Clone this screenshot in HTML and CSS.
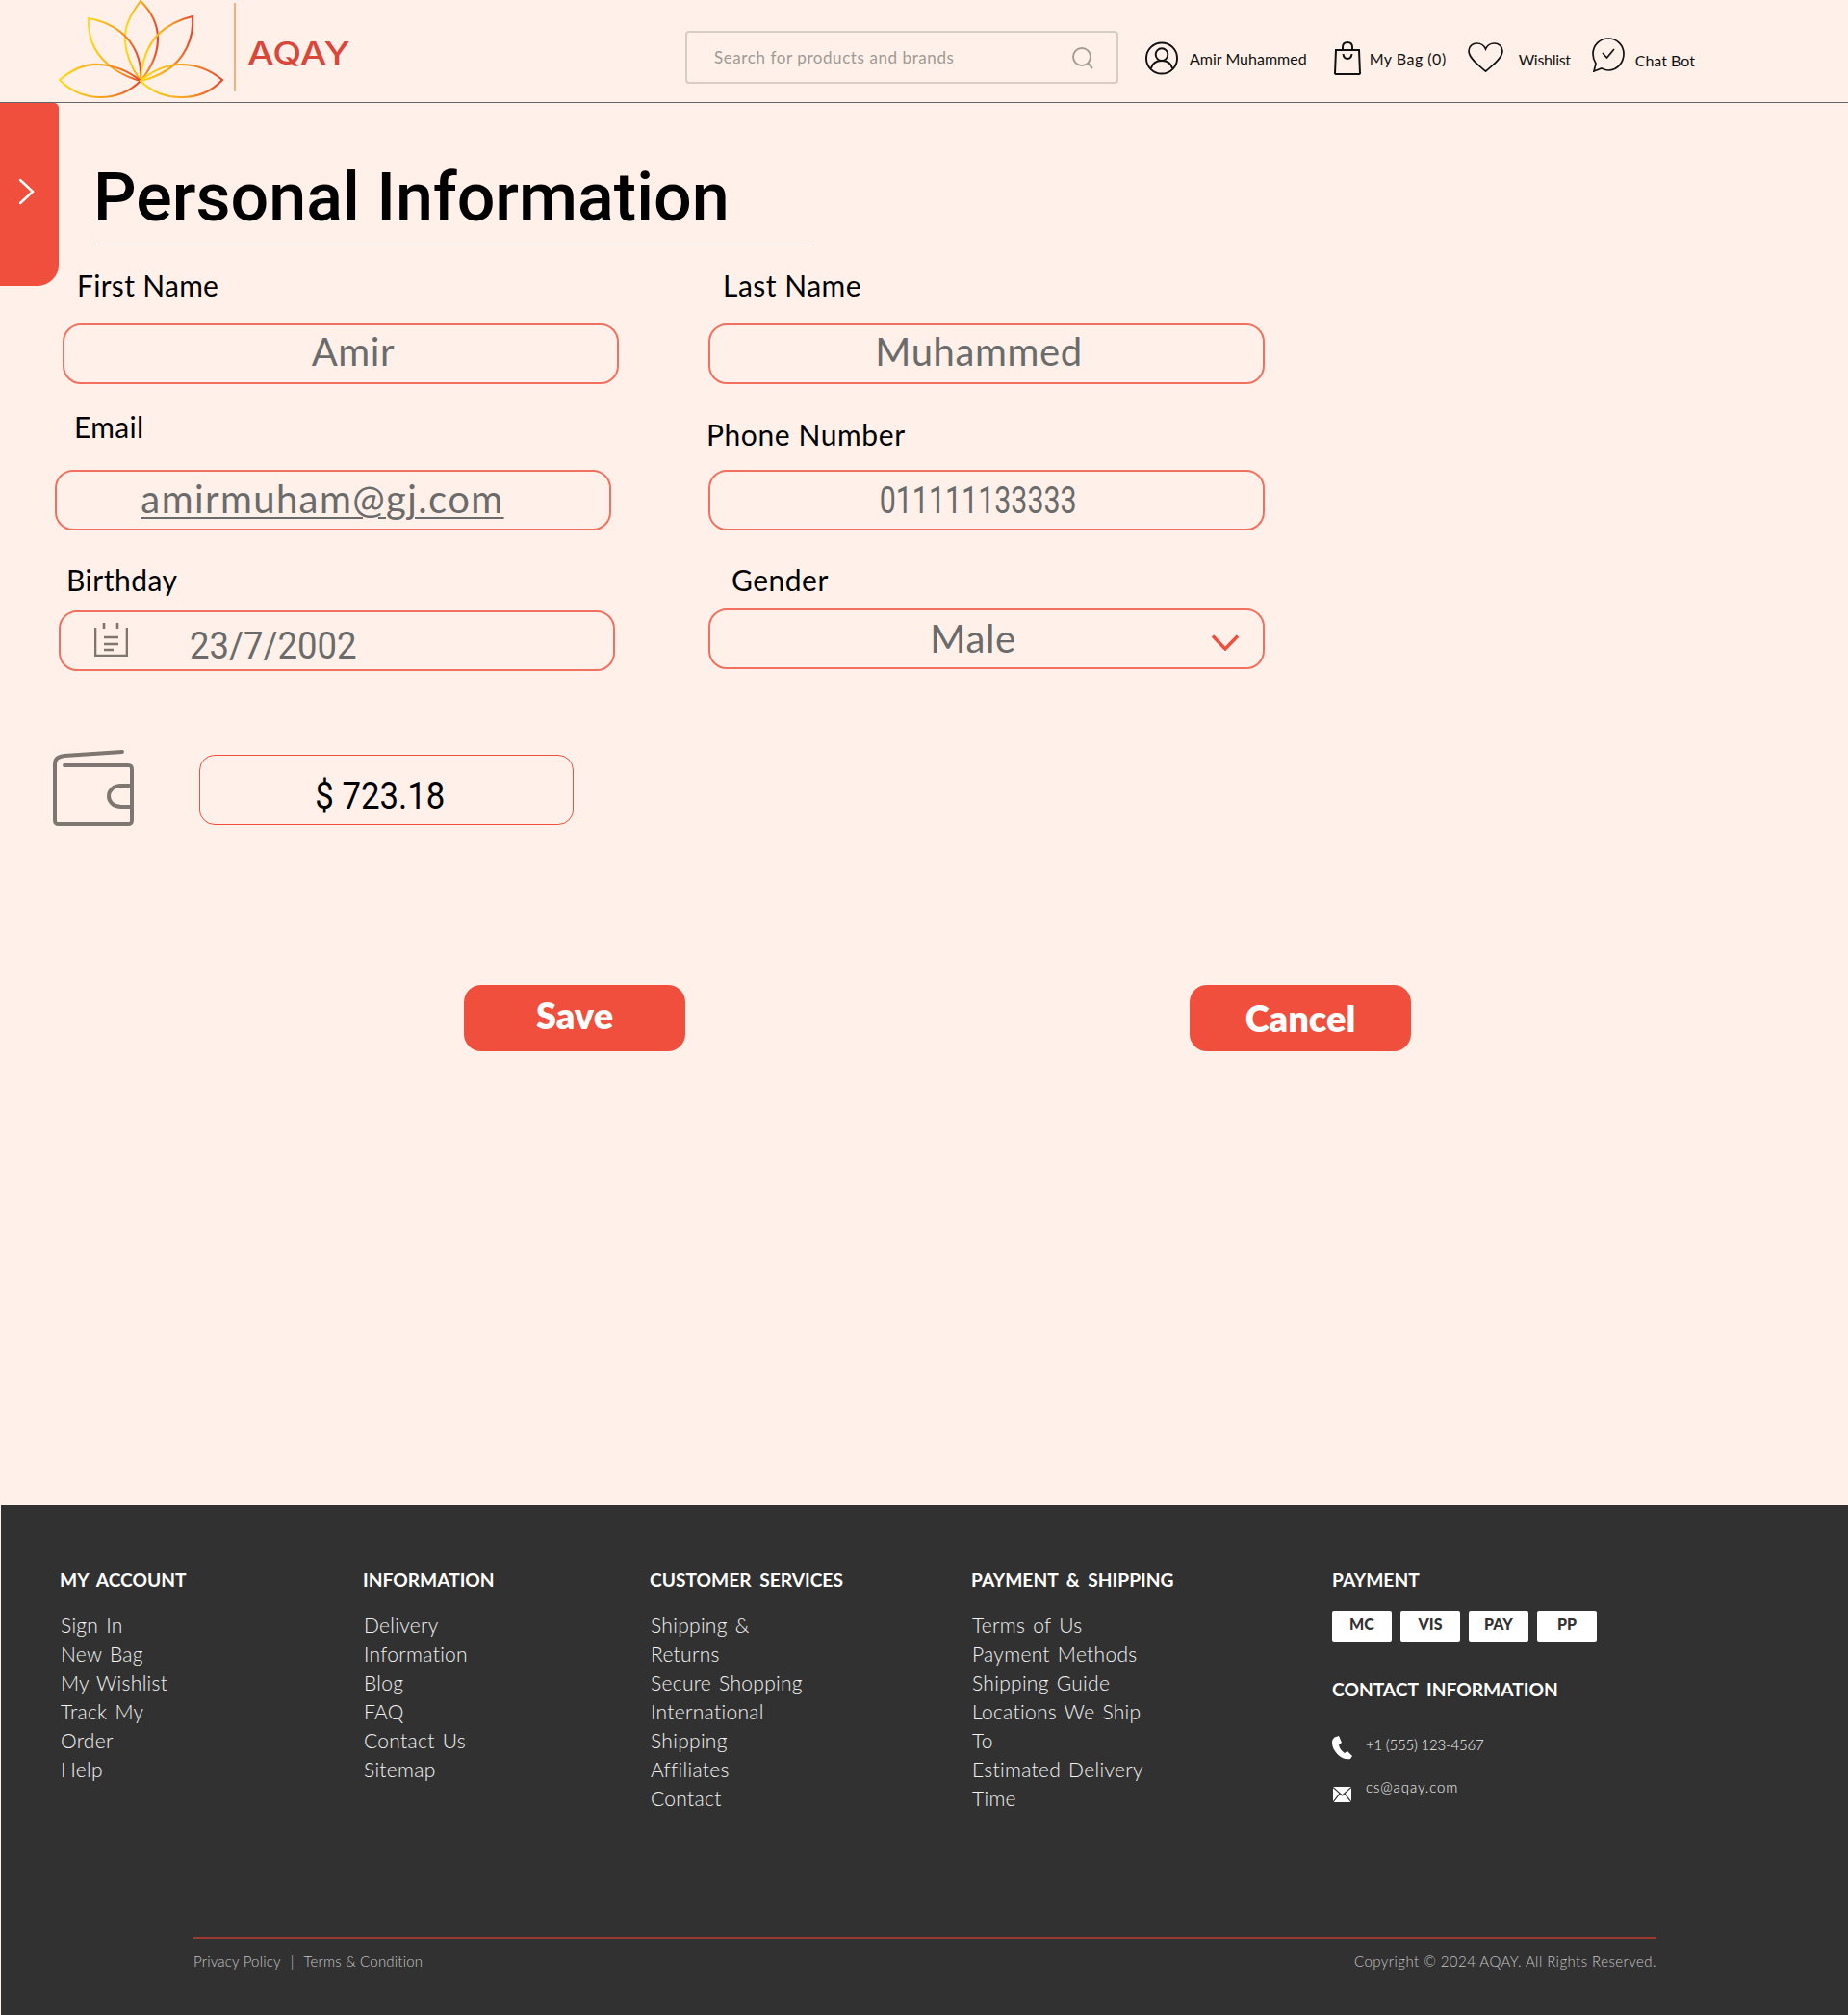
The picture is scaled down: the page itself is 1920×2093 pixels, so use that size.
FILE: index.html
```html
<!DOCTYPE html>
<html lang="en">

<head>
    <meta charset="UTF-8">
    <meta name="viewport" content="width=device-width, initial-scale=1.0">
    <title>AQAY - Personal Information</title>
    <link rel="stylesheet" href="styles.css">
</head>

<body>

    <header class="site-header">
        <svg class="logo" viewBox="0 0 172 103" fill="none" stroke-width="2.1">
            <defs>
                <linearGradient id="petal-a" x1="0" y1="0" x2="1" y2="0">
                    <stop offset="0" stop-color="#ffdc14" />
                    <stop offset="0.55" stop-color="#f9a01f" />
                    <stop offset="1" stop-color="#e8452f" />
                </linearGradient>
            </defs>
            <path stroke="url(#petal-a)" d="M85 1C74 16 68 27 69 43C70 60 78 74 85 84C95 72 103 58 103 40C103 25 95 11 85 1Z" />
            <path stroke="url(#petal-a)" d="M31 19C30 42 40 60 58 72C67 78 77 82 85 84C87 62 78 44 64 33C54 25 43 21 31 19Z" />
            <path stroke="url(#petal-a)" d="M85 84C86 66 91 49 103 36C113 26 126 20 139 17C141 40 130 62 112 73C104 78 94 82 85 84Z" />
            <path stroke="url(#petal-a)" d="M1 83C14 72 27 66 42 67C58 68 73 74 85 84C74 95 59 101 43 101C27 101 11 94 1 83Z" />
            <path stroke="url(#petal-a)" d="M85 84C98 73 112 67 127 67C143 67 158 73 170 83C159 95 143 101 127 101C111 101 96 95 85 84Z" />
        </svg>
        <span class="logo-divider"></span>
        <span class="brand">AQAY</span>

        <div class="search-box">
            <span class="search-text">Search for products and brands</span>
            <svg class="search-icon" viewBox="0 0 24 24" fill="none" stroke="#a39d98" stroke-width="2">
                <circle cx="11" cy="11" r="9" />
                <path d="M17.5 17.5L22 23" />
            </svg>
        </div>

        <a class="nav-item nav-user">
            <svg class="icon-user" viewBox="0 0 36 36" fill="none" stroke="#111" stroke-width="2">
                <circle cx="18" cy="18" r="16.5" />
                <circle cx="18" cy="14" r="6.5" />
                <path d="M6.5 29C8 23 12 20.5 18 20.5C24 20.5 28 23 29.5 29" />
            </svg>
            <span>Amir Muhammed</span>
        </a>
        <a class="nav-item nav-bag">
            <svg class="icon-bag" viewBox="0 0 28 35" fill="none" stroke="#111" stroke-width="2">
                <path d="M2 9H26L27 33C27 34 26 34 25 34H3C2 34 1 34 1 33Z" />
                <path d="M9 9V6C9 3 11 1 14 1C17 1 19 3 19 6V9" />
                <path d="M9.5 13C10 17 12 18 14 18C16 18 18 17 18.5 13" />
            </svg>
            <span>My Bag (0)</span>
        </a>
        <a class="nav-item nav-wish">
            <svg class="icon-heart" viewBox="0 0 37 31" fill="none" stroke="#111" stroke-width="1.7">
                <path d="M18.5 30C13 25 1 17 1 9C1 4 5 1 9.5 1C13.5 1 17 3.5 18.5 7C20 3.5 23.5 1 27.5 1C32 1 36 4 36 9C36 17 24 25 18.5 30Z" />
            </svg>
            <span>Wishlist</span>
        </a>
        <a class="nav-item nav-chat">
            <svg class="icon-chat" viewBox="0 0 34 36" fill="none" stroke="#111" stroke-width="1.7">
                <path d="M17 1C8 1 1 8 1 17C1 21 2 24 4 27L2 35L10 32C12 33 15 34 17 34C26 34 33 26 33 17C33 8 26 1 17 1Z" />
                <path d="M11 16L15.5 21L23 12" />
            </svg>
            <span>Chat Bot</span>
        </a>
    </header>

    <main class="page">
        <!-- side menu handle -->
        <div class="side-tab">
            <svg viewBox="0 0 17 28" fill="none" stroke="#fff" stroke-width="2.5" stroke-linecap="round">
                <path d="M2 2L15 14L2 26" />
            </svg>
        </div>

        <h1 class="page-title">Personal Information</h1>

        <div class="form-grid">
            <div class="field field-first">
                <label>First Name</label>
                <div class="input-box"><span>Amir</span></div>
            </div>
            <div class="field field-last">
                <label>Last Name</label>
                <div class="input-box"><span>Muhammed</span></div>
            </div>
            <div class="field field-email">
                <label>Email</label>
                <div class="input-box"><a>amirmuham@gj.com</a></div>
            </div>
            <div class="field field-phone">
                <label>Phone Number</label>
                <div class="input-box digits"><span>011111133333</span></div>
            </div>
            <div class="field field-birthday">
                <label>Birthday</label>
                <div class="input-box digits">
                    <svg class="icon-note" viewBox="0 0 35 35" fill="none" stroke="#7d7671" stroke-width="2.6">
                        <path d="M10 0V6M24 0V6M1 5V34H34V5" />
                        <path d="M10 15H25M10 22H25M10 28H20" />
                    </svg>
                    <span>23/7/2002</span>
                </div>
            </div>
            <div class="field field-gender">
                <label>Gender</label>
                <div class="input-box">
                    <span>Male</span>
                    <svg class="icon-down" viewBox="0 0 28 17" fill="none" stroke="#ef4f3c" stroke-width="3.4">
                        <path d="M1 1.5L14 15L27 1.5" />
                    </svg>
                </div>
            </div>
        </div>

        <div class="wallet-row">
            <svg class="icon-wallet" viewBox="0 0 84 79" fill="none" stroke="#7d7671" stroke-width="4" stroke-linecap="round">
                <path d="M72 2L12 6C5 7 2 9 2 15V73C2 76 3 77 6 77H78C81 77 82 76 82 73V20C82 17 81 16 78 16H12" />
                <path d="M82 37H71C63 37 58 42 58 48C58 54 63 59 71 59H82" />
            </svg>
            <div class="balance"><span>$ 723.18</span></div>
        </div>

        <div class="form-actions">
            <button class="btn btn-save">Save</button>
            <button class="btn btn-cancel">Cancel</button>
        </div>
    </main>

    <footer class="site-footer">
        <div class="footer-cols">
            <div class="footer-col col-account">
                <h3>MY ACCOUNT</h3>
                <ul>
                    <li>Sign In</li>
                    <li>New Bag</li>
                    <li>My Wishlist</li>
                    <li>Track My<br>Order</li>
                    <li>Help</li>
                </ul>
            </div>
            <div class="footer-col col-info">
                <h3>INFORMATION</h3>
                <ul>
                    <li>Delivery<br>Information</li>
                    <li>Blog</li>
                    <li>FAQ</li>
                    <li>Contact Us</li>
                    <li>Sitemap</li>
                </ul>
            </div>
            <div class="footer-col col-service">
                <h3>CUSTOMER SERVICES</h3>
                <ul>
                    <li>Shipping &amp;<br>Returns</li>
                    <li>Secure Shopping</li>
                    <li>International<br>Shipping</li>
                    <li>Affiliates</li>
                    <li>Contact</li>
                </ul>
            </div>
            <div class="footer-col col-shipping">
                <h3>PAYMENT &amp; SHIPPING</h3>
                <ul>
                    <li>Terms of Us</li>
                    <li>Payment Methods</li>
                    <li>Shipping Guide</li>
                    <li>Locations We Ship<br>To</li>
                    <li>Estimated Delivery<br>Time</li>
                </ul>
            </div>
            <div class="footer-col col-contact">
                <h3>PAYMENT</h3>
                <div class="pay-cards">
                    <span>MC</span>
                    <span>VIS</span>
                    <span>PAY</span>
                    <span>PP</span>
                </div>
                <h3 class="contact-title">CONTACT INFORMATION</h3>
                <div class="contact-line contact-phone">
                    <svg viewBox="0 0 21 25" fill="#fff">
                        <path d="M2.5 1.5L7 0L10 7L7 9.5C7.5 13 10 16 13 18L16 16L21 21L19 24C10 26.5 -2.5 14 0.5 4Z" />
                    </svg>
                    <span>+1 (555) 123-4567</span>
                </div>
                <div class="contact-line contact-mail">
                    <svg viewBox="0 0 19 16">
                        <rect width="19" height="16" fill="#fff" />
                        <path d="M0 .5L9.5 9L19 .5M0 16L7 6.8M19 16L12 6.8" fill="none" stroke="#313131" stroke-width="1.2" />
                    </svg>
                    <span>cs@aqay.com</span>
                </div>
            </div>
        </div>

        <div class="footer-bottom">
            <div class="legal-links">
                <span>Privacy Policy</span>
                <span class="sep">|</span>
                <span>Terms &amp; Condition</span>
            </div>
            <div class="copyright">Copyright © 2024 AQAY. All Rights Reserved.</div>
        </div>
    </footer>

</body>

</html>
```

FILE: styles.css
```css
* {
    box-sizing: border-box;
}

body {
    margin: 0;
    padding: 0;
    width: 1920px;
    background-color: #fff1e9;
    font-family: "Lato", "Noto Sans", sans-serif;
    color: #000;
}

/* Header */
.site-header {
    display: flex;
    align-items: flex-start;
    height: 107px;
    padding-left: 61px;
    border-bottom: 1px solid #666;
}

.logo {
    width: 172px;
    height: 103px;
    flex-shrink: 0;
}

.logo-divider {
    width: 2px;
    height: 92px;
    margin: 3px 0 0 10px;
    background-color: #f5b07a;
}

.brand {
    width: 120px;
    margin: 33px 0 0 12px;
    font-family: "Inter", sans-serif;
    font-size: 32px;
    line-height: 46px;
    font-weight: 500;
    color: #d9473a;
    transform: scaleX(1.22);
    transform-origin: left center;
}

.search-box {
    display: flex;
    align-items: center;
    justify-content: space-between;
    width: 450px;
    height: 55px;
    margin: 32px 0 0 335px;
    padding: 0 23px 0 28px;
    border: 2px solid #d6cec6;
    border-radius: 4px;
}

.search-text {
    font-size: 17px;
    letter-spacing: 0.58px;
    color: #a09a95;
}

.search-icon {
    width: 24px;
    height: 24px;
}

.nav-item {
    display: flex;
    align-items: center;
    font-size: 16px;
    line-height: 20px;
    color: #111;
    white-space: nowrap;
}

.nav-user {
    margin: 43px 0 0 27px;
    gap: 11px;
}

.nav-bag {
    margin: 43px 0 0 28px;
    gap: 9px;
    letter-spacing: 0.5px;
}

.nav-wish {
    margin: 44px 0 0 22px;
    gap: 16px;
    letter-spacing: -0.3px;
}

.nav-wish span {
    margin-top: 5px;
}

.nav-chat {
    margin: 39px 0 0 22px;
    gap: 11px;
}

.nav-chat span {
    margin-top: 12px;
}

.icon-user {
    width: 36px;
    height: 35px;
}

.icon-bag {
    width: 28px;
    height: 35px;
}

.icon-heart {
    width: 37px;
    height: 31px;
}

.icon-chat {
    width: 34px;
    height: 36px;
}

/* Main form */
.page {
    position: relative;
    height: 1456px;
    padding-top: 65px;
}

.side-tab {
    position: absolute;
    top: 0;
    left: 0;
    display: flex;
    align-items: center;
    width: 61px;
    height: 190px;
    padding: 0 0 6px 19px;
    background-color: #ef4f3c;
    border-radius: 0 5px 22px 0;
}

.side-tab svg {
    width: 17px;
    height: 28px;
}

.page-title {
    width: 747px;
    height: 83px;
    margin: 0 0 0 97px;
    border-bottom: 1px solid #111;
    font-family: "Roboto", sans-serif;
    font-size: 70px;
    line-height: 66px;
    font-weight: 500;
    white-space: nowrap;
}

.form-grid {
    display: grid;
    grid-template-columns: 736px 578px;
    margin-top: 22px;
}

.field label {
    display: block;
    font-size: 30px;
    line-height: 38px;
    letter-spacing: 0.3px;
}

.input-box {
    position: relative;
    display: flex;
    align-items: center;
    justify-content: center;
    width: 578px;
    height: 63px;
    border: 2px solid #f2705f;
    border-radius: 19px;
    font-size: 40px;
    letter-spacing: 0.6px;
    color: #6b6b6b;
    white-space: nowrap;
}

.digits {
    font-family: "Roboto", sans-serif;
    font-size: 38px;
    letter-spacing: 0;
}

.input-box a {
    letter-spacing: 1.4px;
    text-decoration: underline;
    text-decoration-thickness: 2px;
    text-underline-offset: 4px;
}

.field-first {
    margin-left: 65px;
}

.field-first label {
    margin: 0 0 21px 15px;
}

.field-first .input-box {
    padding: 0 0 6px 26px;
}

.field-last label {
    margin: 0 0 21px 15px;
    letter-spacing: 0.5px;
}

.field-last .input-box {
    padding: 0 16px 6px 0;
}

.field-email {
    margin: 25px 0 0 57px;
}

.field-email label {
    margin: 0 0 26px 20px;
}

.field-email .input-box {
    padding: 0 22px 4px 0;
}

.field-phone {
    margin-top: 33px;
}

.field-phone label {
    margin: 0 0 18px -2px;
    letter-spacing: 0.6px;
}

.field-phone .input-box {
    padding: 0 18px 0 0;
}

.field-phone span {
    display: inline-block;
    transform: scaleX(0.8);
}

.field-birthday {
    margin: 32px 0 0 61px;
}

.field-birthday label {
    margin: 0 0 13px 8px;
    letter-spacing: 0.5px;
}

.field-birthday .input-box {
    justify-content: flex-start;
    padding: 10px 0 0 134px;
}

.field-birthday span {
    display: inline-block;
    transform: scaleX(0.96);
    transform-origin: left center;
}

.icon-note {
    position: absolute;
    top: 11px;
    left: 35px;
    width: 35px;
    height: 35px;
}

.field-gender {
    margin-top: 32px;
}

.field-gender label {
    margin: 0 0 11px 24px;
    letter-spacing: 0.5px;
}

.field-gender .input-box {
    padding: 0 28px 2px 0;
}

.icon-down {
    position: absolute;
    top: 25px;
    right: 25px;
    width: 28px;
    height: 17px;
}

.wallet-row {
    display: flex;
    align-items: flex-start;
    margin: 82px 0 0 55px;
}

.icon-wallet {
    width: 84px;
    height: 79px;
}

.balance {
    display: flex;
    align-items: center;
    justify-content: center;
    width: 389px;
    height: 73px;
    margin: 5px 0 0 68px;
    padding: 12px 13px 0 0;
    border: 1px solid #ef4f3c;
    border-radius: 16px;
    font-family: "Roboto", sans-serif;
    font-size: 38px;
}

.balance span {
    display: inline-block;
    transform: scaleX(0.915);
}

.form-actions {
    display: flex;
    gap: 524px;
    margin: 165px 0 0 482px;
}

.btn {
    width: 230px;
    height: 69px;
    border: none;
    border-radius: 18px;
    background-color: #ef4f3c;
    color: #fff;
    font-family: "Lato", sans-serif;
    font-weight: 800;
    cursor: pointer;
}

.btn-save {
    padding-bottom: 8px;
    font-size: 38px;
}

.btn-cancel {
    padding: 0 0 2px 0;
    font-size: 38px;
}

/* Footer */
.site-footer {
    display: flex;
    flex-direction: column;
    height: 530px;
    margin-left: 1px;
    padding-top: 63px;
    background-color: #313131;
    color: #f2f2f2;
}

.footer-cols {
    display: flex;
    height: 386px;
    padding-left: 61px;
}

.footer-col h3 {
    margin: 0;
    font-size: 19.2px;
    line-height: 30px;
    font-weight: 700;
    word-spacing: 4px;
    color: #fff;
    white-space: nowrap;
}

.footer-col ul {
    margin: 17px 0 0 1px;
    padding: 0;
    list-style: none;
    font-size: 21px;
    line-height: 30px;
    font-weight: 300;
    letter-spacing: 0.3px;
    word-spacing: 2px;
}

.col-account {
    width: 315px;
}

.col-info {
    width: 298px;
}

.col-service {
    width: 334px;
}

.col-shipping {
    width: 375px;
}

.pay-cards {
    display: flex;
    gap: 9px;
    margin-top: 17px;
}

.pay-cards span {
    width: 62px;
    height: 33px;
    padding-top: 2px;
    border-radius: 2px;
    background-color: #fff;
    font-size: 16px;
    line-height: 24px;
    font-weight: 900;
    text-align: center;
    color: #313131;
}

.contact-title {
    margin-top: 34px !important;
}

.contact-line {
    display: flex;
    align-items: flex-start;
    gap: 14px;
    font-size: 15px;
    line-height: 18px;
    font-weight: 300;
}

.contact-line svg {
    flex-shrink: 0;
}

.contact-phone {
    margin-top: 33px;
    letter-spacing: -0.2px;
}

.contact-phone svg {
    width: 21px;
    height: 25px;
}

.contact-mail {
    margin-top: 24px;
    letter-spacing: 0.9px;
}

.contact-mail svg {
    width: 19px;
    height: 16px;
    margin: 4px 1px 0 1px;
}

.contact-mail span {
    margin-top: -5px;
}

.footer-bottom {
    display: flex;
    justify-content: space-between;
    align-items: center;
    width: 1520px;
    margin-left: 200px;
    padding-top: 14px;
    border-top: 2px solid #9c3a2e;
    font-size: 15px;
    line-height: 18px;
    font-weight: 300;
    color: #c4c4c4;
}

.legal-links {
    display: flex;
    gap: 10px;
    letter-spacing: 0.2px;
}

.copyright {
    letter-spacing: 0.45px;
}
```
